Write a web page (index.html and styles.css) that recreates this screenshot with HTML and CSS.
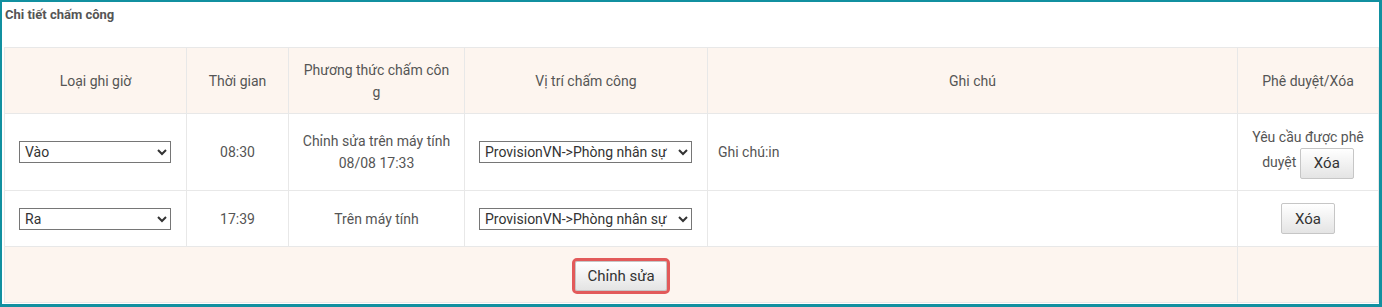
FILE: index.html
```html
<!DOCTYPE html>
<html lang="vi">
<head>
  <meta charset="UTF-8" />
  <title>Chi tiết chấm công</title>
  <link rel="stylesheet" href="styles.css">
</head>
<body>
  <div class="frame">
    <div class="panel-title">Chi tiết chấm công</div>
    <table class="att-table">
      <colgroup>
        <col class="c-type">
        <col class="c-time">
        <col class="c-method">
        <col class="c-place">
        <col class="c-note">
        <col class="c-action">
      </colgroup>
      <tr class="head-row">
        <td>Loại ghi giờ</td>
        <td>Thời gian</td>
        <td class="method-head">Phương thức chấm công</td>
        <td>Vị trí chấm công</td>
        <td>Ghi chú</td>
        <td>Phê duyệt/Xóa</td>
      </tr>
      <tr class="row-one">
        <td>
          <select class="sel sel-type">
            <option>Vào</option>
            <option>Ra</option>
          </select>
        </td>
        <td>08:30</td>
        <td>Chỉnh sửa trên máy tính<br>08/08 17:33</td>
        <td>
          <select class="sel sel-place">
            <option>ProvisionVN-&gt;Phòng nhân sự</option>
          </select>
        </td>
        <td class="note">Ghi chú:in</td>
        <td>Yêu cầu được phê duyệt <button class="btn">Xóa</button></td>
      </tr>
      <tr class="row-two">
        <td>
          <select class="sel sel-type">
            <option>Ra</option>
            <option>Vào</option>
          </select>
        </td>
        <td>17:39</td>
        <td>Trên máy tính</td>
        <td>
          <select class="sel sel-place">
            <option>ProvisionVN-&gt;Phòng nhân sự</option>
          </select>
        </td>
        <td class="note"></td>
        <td><button class="btn">Xóa</button></td>
      </tr>
      <tr class="foot-row">
        <td colspan="5"><button class="btn btn-edit">Chỉnh sửa</button></td>
        <td></td>
      </tr>
    </table>
  </div>
</body>
</html>
```

FILE: styles.css
```css
* {
  box-sizing: border-box;
}
body {
  margin: 0;
  background: white;
  font-family: Roboto, "Liberation Sans", sans-serif;
  color: #555;
}
.frame {
  height: 307px;
  border-style: solid;
  border-color: #1190a0;
  border-width: 2px 3px 3px 2px;
  padding: 0 1px 0 2px;
}
.panel-title {
  height: 45px;
  padding: 5px 0 0 1px;
  font-size: 13px;
  font-weight: bold;
  line-height: 16px;
}
.att-table {
  width: 1374px;
  table-layout: fixed;
  border-collapse: collapse;
  font-size: 14px;
  line-height: 22px;
}
.c-type { width: 182px; }
.c-time { width: 102px; }
.c-method { width: 176px; }
.c-place { width: 243px; }
.c-note { width: 530px; }
.c-action { width: 141px; }
.att-table td {
  border: 1px solid #e8e8e8;
  padding: 0 10px;
  text-align: center;
  vertical-align: middle;
}
.head-row td,
.foot-row td {
  background: #fdf5ef;
}
.head-row { height: 66px; }
.row-one { height: 77px; }
.row-two { height: 56px; }
.foot-row { height: 56px; }
.att-table td.method-head {
  padding: 0 12px;
  word-break: break-all;
}
.att-table td.note {
  text-align: left;
}
.sel {
  height: 22px;
  border: 1px solid #767676;
  border-radius: 0;
  background: white;
  color: #333;
  font-family: Roboto, "Liberation Sans", sans-serif;
  font-size: 14px;
  padding: 0 1px;
  display: block;
  margin: 0 auto;
}
.sel-type { width: 152px; margin-left: 4px; }
.sel-place { width: 213px; margin-left: 4px; }
.btn {
  height: 31px;
  padding: 0 13px;
  border: 1px solid #c6c6c6;
  border-radius: 2px;
  background: linear-gradient(#ffffff, #e4e4e4);
  color: #333;
  font-family: Roboto, "Liberation Sans", sans-serif;
  font-size: 15px;
  vertical-align: middle;
}
.btn-edit {
  height: 30px;
  padding: 0 11px;
  outline: 3px solid #e25a5a;
  outline-offset: 0;
  margin-top: 2px;
}
```
